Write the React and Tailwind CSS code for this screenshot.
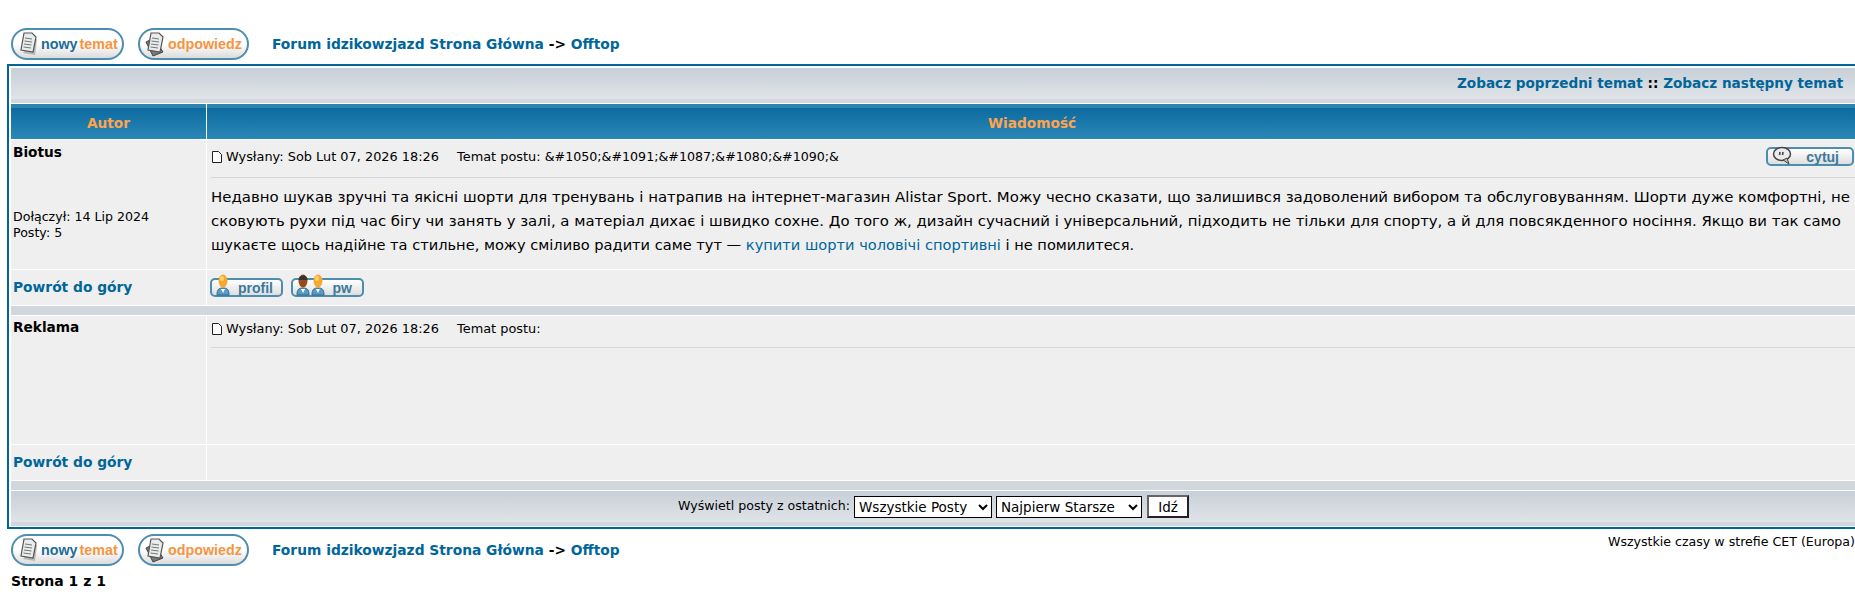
const font = { fontFamily: '"DejaVu Sans", Verdana, sans-serif' };

function Docs({ stacked }) {
  return (
    <svg width="22" height="26" viewBox="0 0 22 26" className="shrink-0">
      {stacked && <path d="M2 11 L10 7 L19 21 L9 25 Z" fill="#77797a" stroke="#444" strokeWidth="1" />}
      {!stacked && <path d="M6 22 L18 24 L20 8 L17 8 Z" fill="#b4b8b9" />}
      <path d="M7 2 L15 2 L19 6 L16 21 L4 19 Z" fill="#e9ecec" stroke="#555" strokeWidth="1.2" />
      <path d="M8 7 L15 8 M7.500 10 L15 11 M7 13 L14.500 14 M6.500 16 L14 17" stroke="#777" strokeWidth="1" />
    </svg>
  );
}

function BigButton({ children, stacked, width }) {
  return (
    <div
      className={`${width} h-[32px] flex items-center pl-[4px] gap-[2px] rounded-[16px] border-2 border-[#4d8db0] bg-linear-to-b from-white via-white to-[#dcdcdc] shrink-0`}
    >
      <Docs stacked={stacked} />
      <span className="text-[14.3px] font-bold leading-none font-['Liberation_Sans',sans-serif] whitespace-nowrap">
        {children}
      </span>
    </div>
  );
}

function NavRow() {
  return (
    <div className="flex items-center h-[32px] pl-[11px]">
      <BigButton width="w-[113px]">
        <span className="text-[#1d6c95]">nowy</span>
        <span className="text-[#f6943f] ml-[2px]">temat</span>
      </BigButton>
      <div className="w-[14px]" />
      <BigButton stacked width="w-[111px]">
        <span className="text-[#f6943f]">odpowiedz</span>
      </BigButton>
      <div className="ml-[23px] text-[13.8px] font-bold text-[#006699] whitespace-nowrap">
        <a>Forum idzikowzjazd Strona Główna</a>
        <span className="text-black"> -&gt; </span>
        <a>Offtop</a>
      </div>
    </div>
  );
}

function Person({ dark }) {
  return (
    <svg width="14" height="22" viewBox="0 0 14 22" className="shrink-0">
      <path d="M1 21 C1 15 3 14 7 14 C11 14 13 15 13 21 Z" fill="#5b9ac0" stroke="#2f6f95" />
      <path d="M5 15 L7 19 L9 15 Z" fill="#fff" />
      <ellipse cx="7" cy="7" rx="4.500" ry="6.500" fill={dark ? "#9a4a16" : "#f7a92f"} />
      {dark && <path d="M2.500 6 C2.500 0 11.500 0 11.500 6 Z" fill="#333" />}
      {!dark && <ellipse cx="6" cy="4.500" rx="2" ry="2.500" fill="#fbd06f" />}
    </svg>
  );
}

function SmallButton({ children, width, icon, pr, left, top }) {
  return (
    <div className={`relative ${width} h-[19px] rounded-[5px] border-2 border-[#4d8db0] bg-linear-to-b from-white to-[#dedede] flex items-center justify-end ${pr} shrink-0`}>
      <span className={`absolute ${left} ${top} flex`}>{icon}</span>
      <span className="text-[14px] font-bold text-[#3c7a9c] font-['Liberation_Sans',sans-serif] leading-none">
        {children}
      </span>
    </div>
  );
}

function Bubble() {
  return (
    <svg width="20" height="20" viewBox="0 0 20 20">
      <ellipse cx="10" cy="8" rx="8.500" ry="6.500" fill="#ececec" stroke="#444" strokeWidth="1.500" />
      <path d="M11 14 L17 18 L15 12 Z" fill="#bbb" stroke="#444" />
      <path d="M8 6 L7.500 9 M11 6 L10.500 9" stroke="#444" strokeWidth="1.600" />
    </svg>
  );
}

function PostHead({ subject, height, pt }) {
  return (
    <div className={`relative ${height} ${pt} border-b border-[#d1d7dc] flex items-start text-[12.9px] leading-[16px] text-black whitespace-nowrap`}>
      <svg width="10" height="12" viewBox="0 0 10 12" className="ml-[1px] mr-[4px] mt-[2px] shrink-0">
        <path d="M0.500 0.500 H6.500 L9.500 3.500 V11.500 H0.500 Z" fill="#fff" stroke="#222" />
      </svg>
      <span>Wysłany: Sob Lut 07, 2026 18:26</span>
      <span className="ml-[18px]">
        Temat postu: <span className="text-[12.65px]">{subject}</span>
      </span>
    </div>
  );
}

function Sep() {
  return <div className="h-[9px] bg-[#d1d7dc] border-0" />;
}

function Bar({ children, className }) {
  return (
    <div className={`h-[35px] bg-linear-to-b from-[#c7cfd8] to-[#e0e4e8] border-b-[4px] border-[#d1d7dc] ${className}`}>
      {children}
    </div>
  );
}

function BackToTop() {
  return <a className="text-[13.8px] font-bold text-[#006699] whitespace-nowrap">Powrót do góry</a>;
}

export default function App() {
  return (
    <div style={font} className="w-[1855px] h-[592px] overflow-hidden bg-white text-black">
      <div className="h-[28px]" />
      <NavRow />
      <div className="h-[4px]" />

      <div className="ml-[7px] w-[1880px] border-2 border-[#006699] pt-[2px] pl-[2px] pb-[1px] flex flex-col gap-y-px bg-white">
        <Bar className="flex items-center justify-start pl-[1446px]">
          <div className="text-[13.6px] font-bold text-[#006699] whitespace-nowrap">
            Zobacz poprzedni temat <span className="text-black">::</span> Zobacz następny temat
          </div>
        </Bar>

        <div className="flex gap-x-px h-[35px] text-[13.7px] font-bold text-[#ffa34f]">
          <div className="w-[195px] flex items-center justify-center bg-linear-to-b from-[#0a6a9f] to-[#2a88b7] border-t-[4px] border-[#2f83ab]">
            Autor
          </div>
          <div className="flex-1 flex items-center pl-[781px] bg-linear-to-b from-[#0a6a9f] to-[#2a88b7] border-t-[4px] border-[#2f83ab]">
            Wiadomość
          </div>
        </div>

        <div className="flex gap-x-px h-[129px] bg-white">
          <div className="w-[195px] bg-[#efefef] pl-[2px] pt-[4px] flex flex-col">
            <div className="text-[13.7px] font-bold leading-[16px]">Biotus</div>
            <div className="mt-[49px] text-[12.6px] leading-[16px]">
              Dołączył: 14 Lip 2024
              <br />
              Posty: 5
            </div>
          </div>
          <div className="flex-1 bg-[#efefef] px-[4px] relative">
            <PostHead subject={"&#1050;&#1091;&#1087;&#1080;&#1090;&"} height="h-[38px]" pt="pt-[9px]" />
            <div className="absolute left-[1559px] top-[7px]">
              <SmallButton width="w-[88px]" icon={<Bubble />} pr="pr-[13px]" left="left-[4px]" top="-top-[3px]">
                cytuj
              </SmallButton>
            </div>
            <div className="pt-[7px] text-[14.9px] leading-[24px] whitespace-nowrap">
              <span className="text-[14.95px]">
                Недавно шукав зручні та якісні шорти для тренувань і натрапив на інтернет-магазин Alistar Sport. Можу чесно сказати, що залишився задоволений вибором та обслуговуванням. Шорти дуже комфортні, не
              </span>
              <br />
              сковують рухи під час бігу чи занять у залі, а матеріал дихає і швидко сохне. До того ж, дизайн сучасний і універсальний, підходить не тільки для спорту, а й для повсякденного носіння. Якщо ви так само
              <br />
              <span className="text-[14.6px]">
                шукаєте щось надійне та стильне, можу сміливо радити саме тут — <a className="text-[#006699]">купити шорти чоловічі спортивні</a> і не помилитеся.
              </span>
            </div>
          </div>
        </div>

        <div className="flex gap-x-px h-[35px]">
          <div className="w-[195px] bg-[#efefef] pl-[2px] flex items-center">
            <BackToTop />
          </div>
          <div className="flex-1 bg-[#efefef] pl-[3px] flex items-center gap-x-[8px]">
            <SmallButton width="w-[73px]" icon={<Person />} pr="pr-[8px]" left="left-[4px]" top="-top-[6px]">
              profil
            </SmallButton>
            <SmallButton
              width="w-[73px]"
              icon={
                <>
                  <Person dark />
                  <span className="w-[1px]" />
                  <Person />
                </>
              }
              pr="pr-[10px]"
              left="left-[3px]"
              top="-top-[6px]"
            >
              pw
            </SmallButton>
          </div>
        </div>

        <Sep />

        <div className="flex gap-x-px h-[128px]">
          <div className="w-[195px] bg-[#efefef] pl-[2px] pt-[3px] text-[13.7px] font-bold leading-[16px]">Reklama</div>
          <div className="flex-1 bg-[#efefef] px-[4px]">
            <PostHead subject="" height="h-[32px]" pt="pt-[5px]" />
          </div>
        </div>

        <div className="flex gap-x-px h-[35px]">
          <div className="w-[195px] bg-[#efefef] pl-[2px] flex items-center">
            <BackToTop />
          </div>
          <div className="flex-1 bg-[#efefef]" />
        </div>

        <Sep />

        <Bar className="flex items-center pl-[667px]">
          <span className="text-[12.6px] mr-[4px] whitespace-nowrap">Wyświetl posty z ostatnich:</span>
          <select className="h-[22px] w-[138px] border border-black bg-white text-[13.5px]" defaultValue="a">
            <option value="a">Wszystkie Posty</option>
          </select>
          <select className="ml-[4px] h-[22px] w-[146px] border border-black bg-white text-[13.5px]" defaultValue="b">
            <option value="b">Najpierw Starsze</option>
          </select>
          <button className="ml-[5px] h-[23px] w-[42px] border-2 border-[#222] border-l-[#666] border-t-[#666] bg-white text-[13.5px]">
            Idź
          </button>
        </Bar>
      </div>

      <div className="relative">
        <div className="h-[5px]" />
        <NavRow />
        <div className="absolute right-0 top-[5px] text-[12.6px] leading-[16px] whitespace-nowrap">
          Wszystkie czasy w strefie CET (Europa)
        </div>
        <div className="mt-[7px] pl-[11px] text-[14px] font-bold leading-[16px]">Strona 1 z 1</div>
      </div>
    </div>
  );
}
